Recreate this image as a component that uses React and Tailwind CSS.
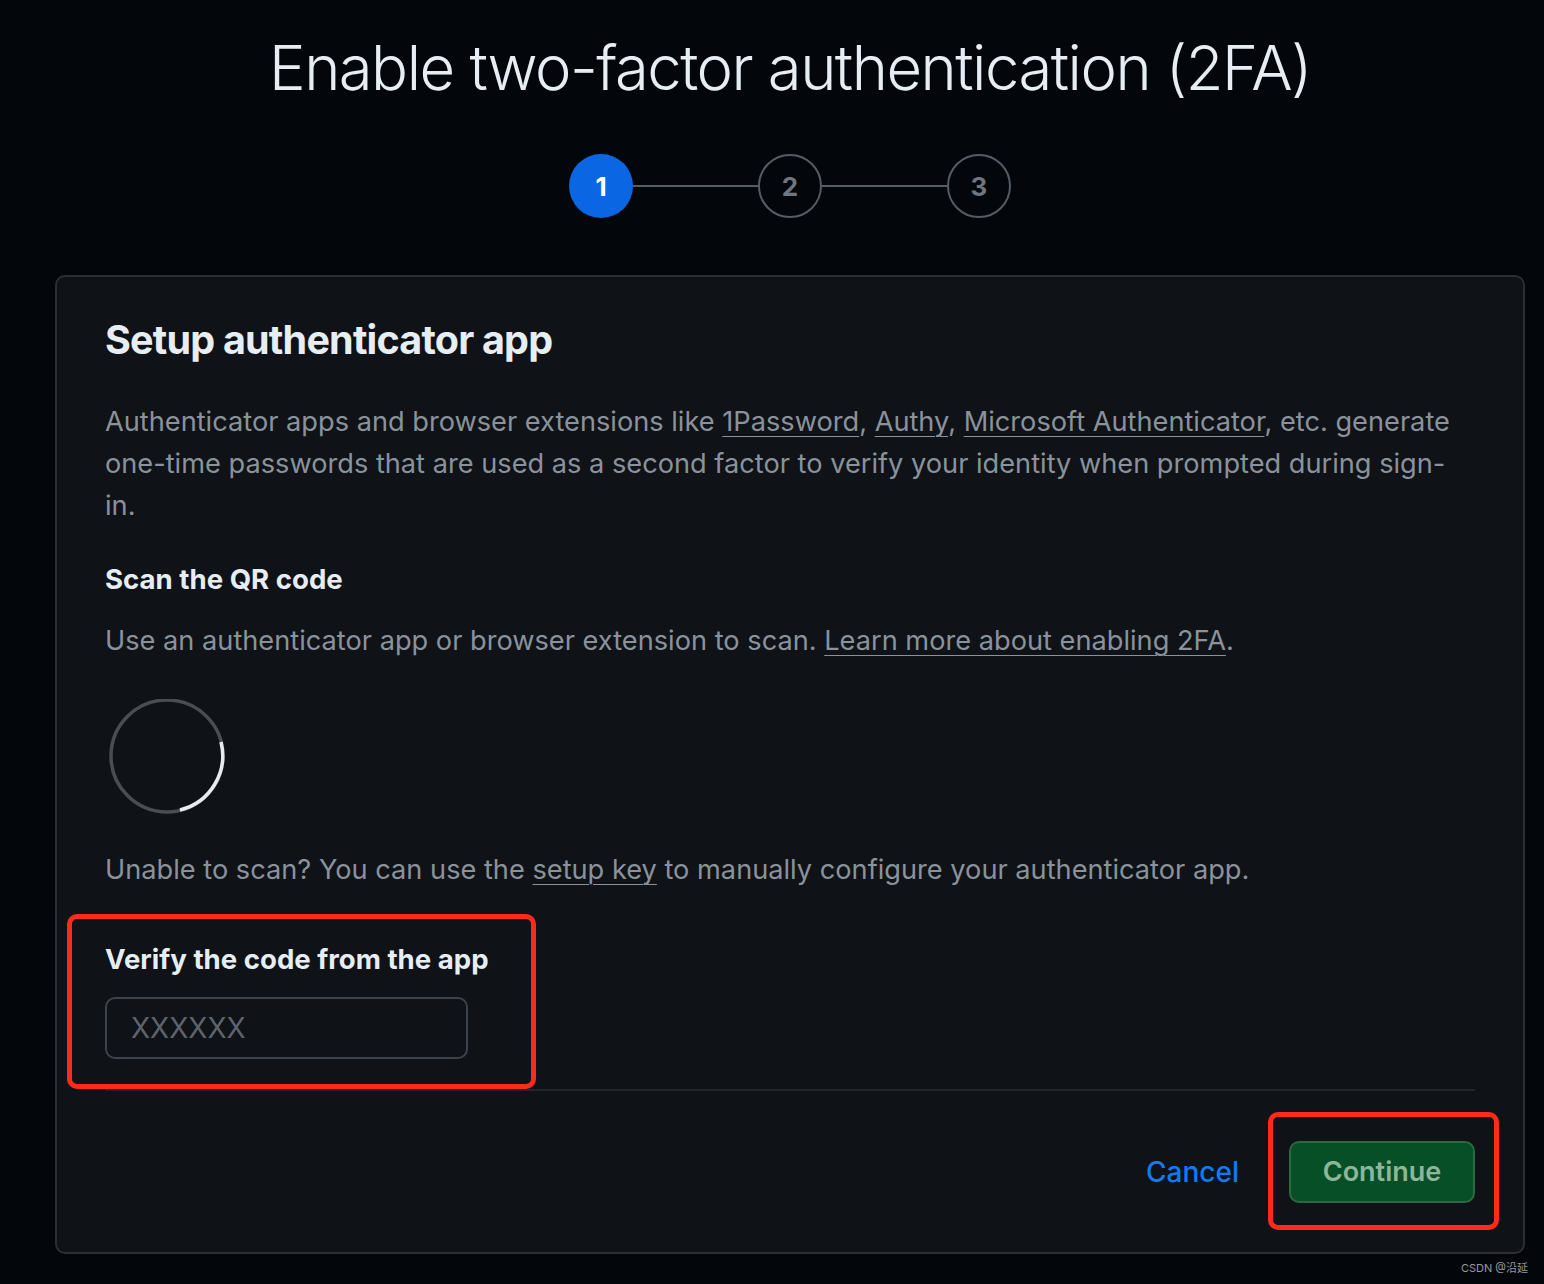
import { useState } from 'react';

const Step = ({ n, active }) => (
  <div
    className={`flex h-[64px] w-[64px] shrink-0 items-center justify-center rounded-full text-[26px] font-bold ${
      active ? 'bg-[#0b66e4] text-white' : 'border-2 border-[#555c66] text-[#6e7681]'
    }`}
  >
    {n}
  </div>
);

const Link = ({ children }) => (
  <a href="#" className="underline decoration-1 underline-offset-[5px]">
    {children}
  </a>
);

export default function App() {
  const [code, setCode] = useState('');

  return (
    <div
      className="relative min-h-[1284px] w-full bg-[#03060b] pl-[36px] text-[#e6edf3]"
      style={{ fontFamily: 'Inter, "Noto Sans", "Noto Sans CJK SC", sans-serif' }}
    >
      <h1 className="pt-[28px] text-center text-[61.5px] font-light leading-[80px] tracking-[-1.5px] text-[#e6edf3]">
        Enable two-factor authentication (2FA)
      </h1>

      {/* stepper */}
      <div className="mt-[46px] flex items-center justify-center">
        <Step n="1" active />
        <div className="h-[2px] w-[125px] bg-[#555c66]" />
        <Step n="2" />
        <div className="h-[2px] w-[125px] bg-[#555c66]" />
        <Step n="3" />
      </div>

      {/* card */}
      <div className="mx-[19px] mt-[57px] rounded-[10px] border-2 border-[#2a2f36] bg-[#0f1217] px-[48px] pt-[37px] pb-[49px]">
        <h2 className="text-[39.5px] font-bold leading-[52px] tracking-[-0.8px] text-[#e6edf3]">
          Setup authenticator app
        </h2>

        <p className="mt-[35px] text-[27.2px] leading-[42px] text-[#8a929b]">
          Authenticator apps and browser extensions like <Link>1Password</Link>, <Link>Authy</Link>,{' '}
          <Link>Microsoft Authenticator</Link>, etc. generate one-time passwords that are used as a second factor to
          verify your identity when prompted during sign-in.
        </p>

        <h3 className="mt-[31px] text-[27.6px] font-bold leading-[42px] text-[#e6edf3]">Scan the QR code</h3>
        <p className="mt-[20px] text-[27.2px] leading-[42px] text-[#8a929b]">
          Use an authenticator app or browser extension to scan. <Link>Learn more about enabling 2FA</Link>.
        </p>

        {/* loading spinner where the QR code would be */}
        <div className="mt-[37px] h-[120px] w-[120px]">
          <svg viewBox="0 0 120 120" className="h-full w-full">
            <circle cx="62" cy="57" r="56" fill="none" stroke="#4a4d52" strokeWidth="3.5" />
            <path d="M 116 43 A 56 56 0 0 1 75 111" fill="none" stroke="#e8ecf0" strokeWidth="3.5" />
          </svg>
        </div>

        <p className="mt-[30px] text-[27.2px] leading-[42px] text-[#8a929b]">
          Unable to scan? You can use the <Link>setup key</Link> to manually configure your authenticator app.
        </p>

        <div className="relative mt-[47px] border-b-2 border-[#22262c] pb-[30px]">
          <div className="absolute left-[-38px] top-[-24px] h-[175px] w-[469px] rounded-[10px] border-[5px] border-[#fe2a1c]" />
          <label className="block text-[27.6px] font-bold leading-[42px] text-[#e6edf3]">
            Verify the code from the app
          </label>
          <input
            value={code}
            onChange={(e) => setCode(e.target.value)}
            placeholder="XXXXXX"
            className="mt-[17px] h-[62px] w-[363px] rounded-[10px] border-2 border-[#3d434b] bg-transparent px-[24px] text-[28px] text-[#e6edf3] outline-none placeholder:text-[#5e646c]"
          />
        </div>

        <div className="flex items-center justify-end gap-[50px] pt-[50px]">
          <a href="#" className="text-[28px] font-medium text-[#0f7bf5]">
            Cancel
          </a>
          <div className="relative">
            <div className="absolute left-[-21px] top-[-29px] h-[118px] w-[231px] rounded-[10px] border-[5px] border-[#fe2a1c]" />
            <button className="h-[62px] w-[186px] rounded-[10px] border-2 border-[#2b6a3c] bg-[#075027] text-[27px] font-semibold text-[#8db798]">
              Continue
            </button>
          </div>
        </div>
      </div>

      <div className="absolute bottom-[8px] right-[16px] text-[11px] text-[#9a9a9a]">CSDN @沿延</div>
    </div>
  );
}
